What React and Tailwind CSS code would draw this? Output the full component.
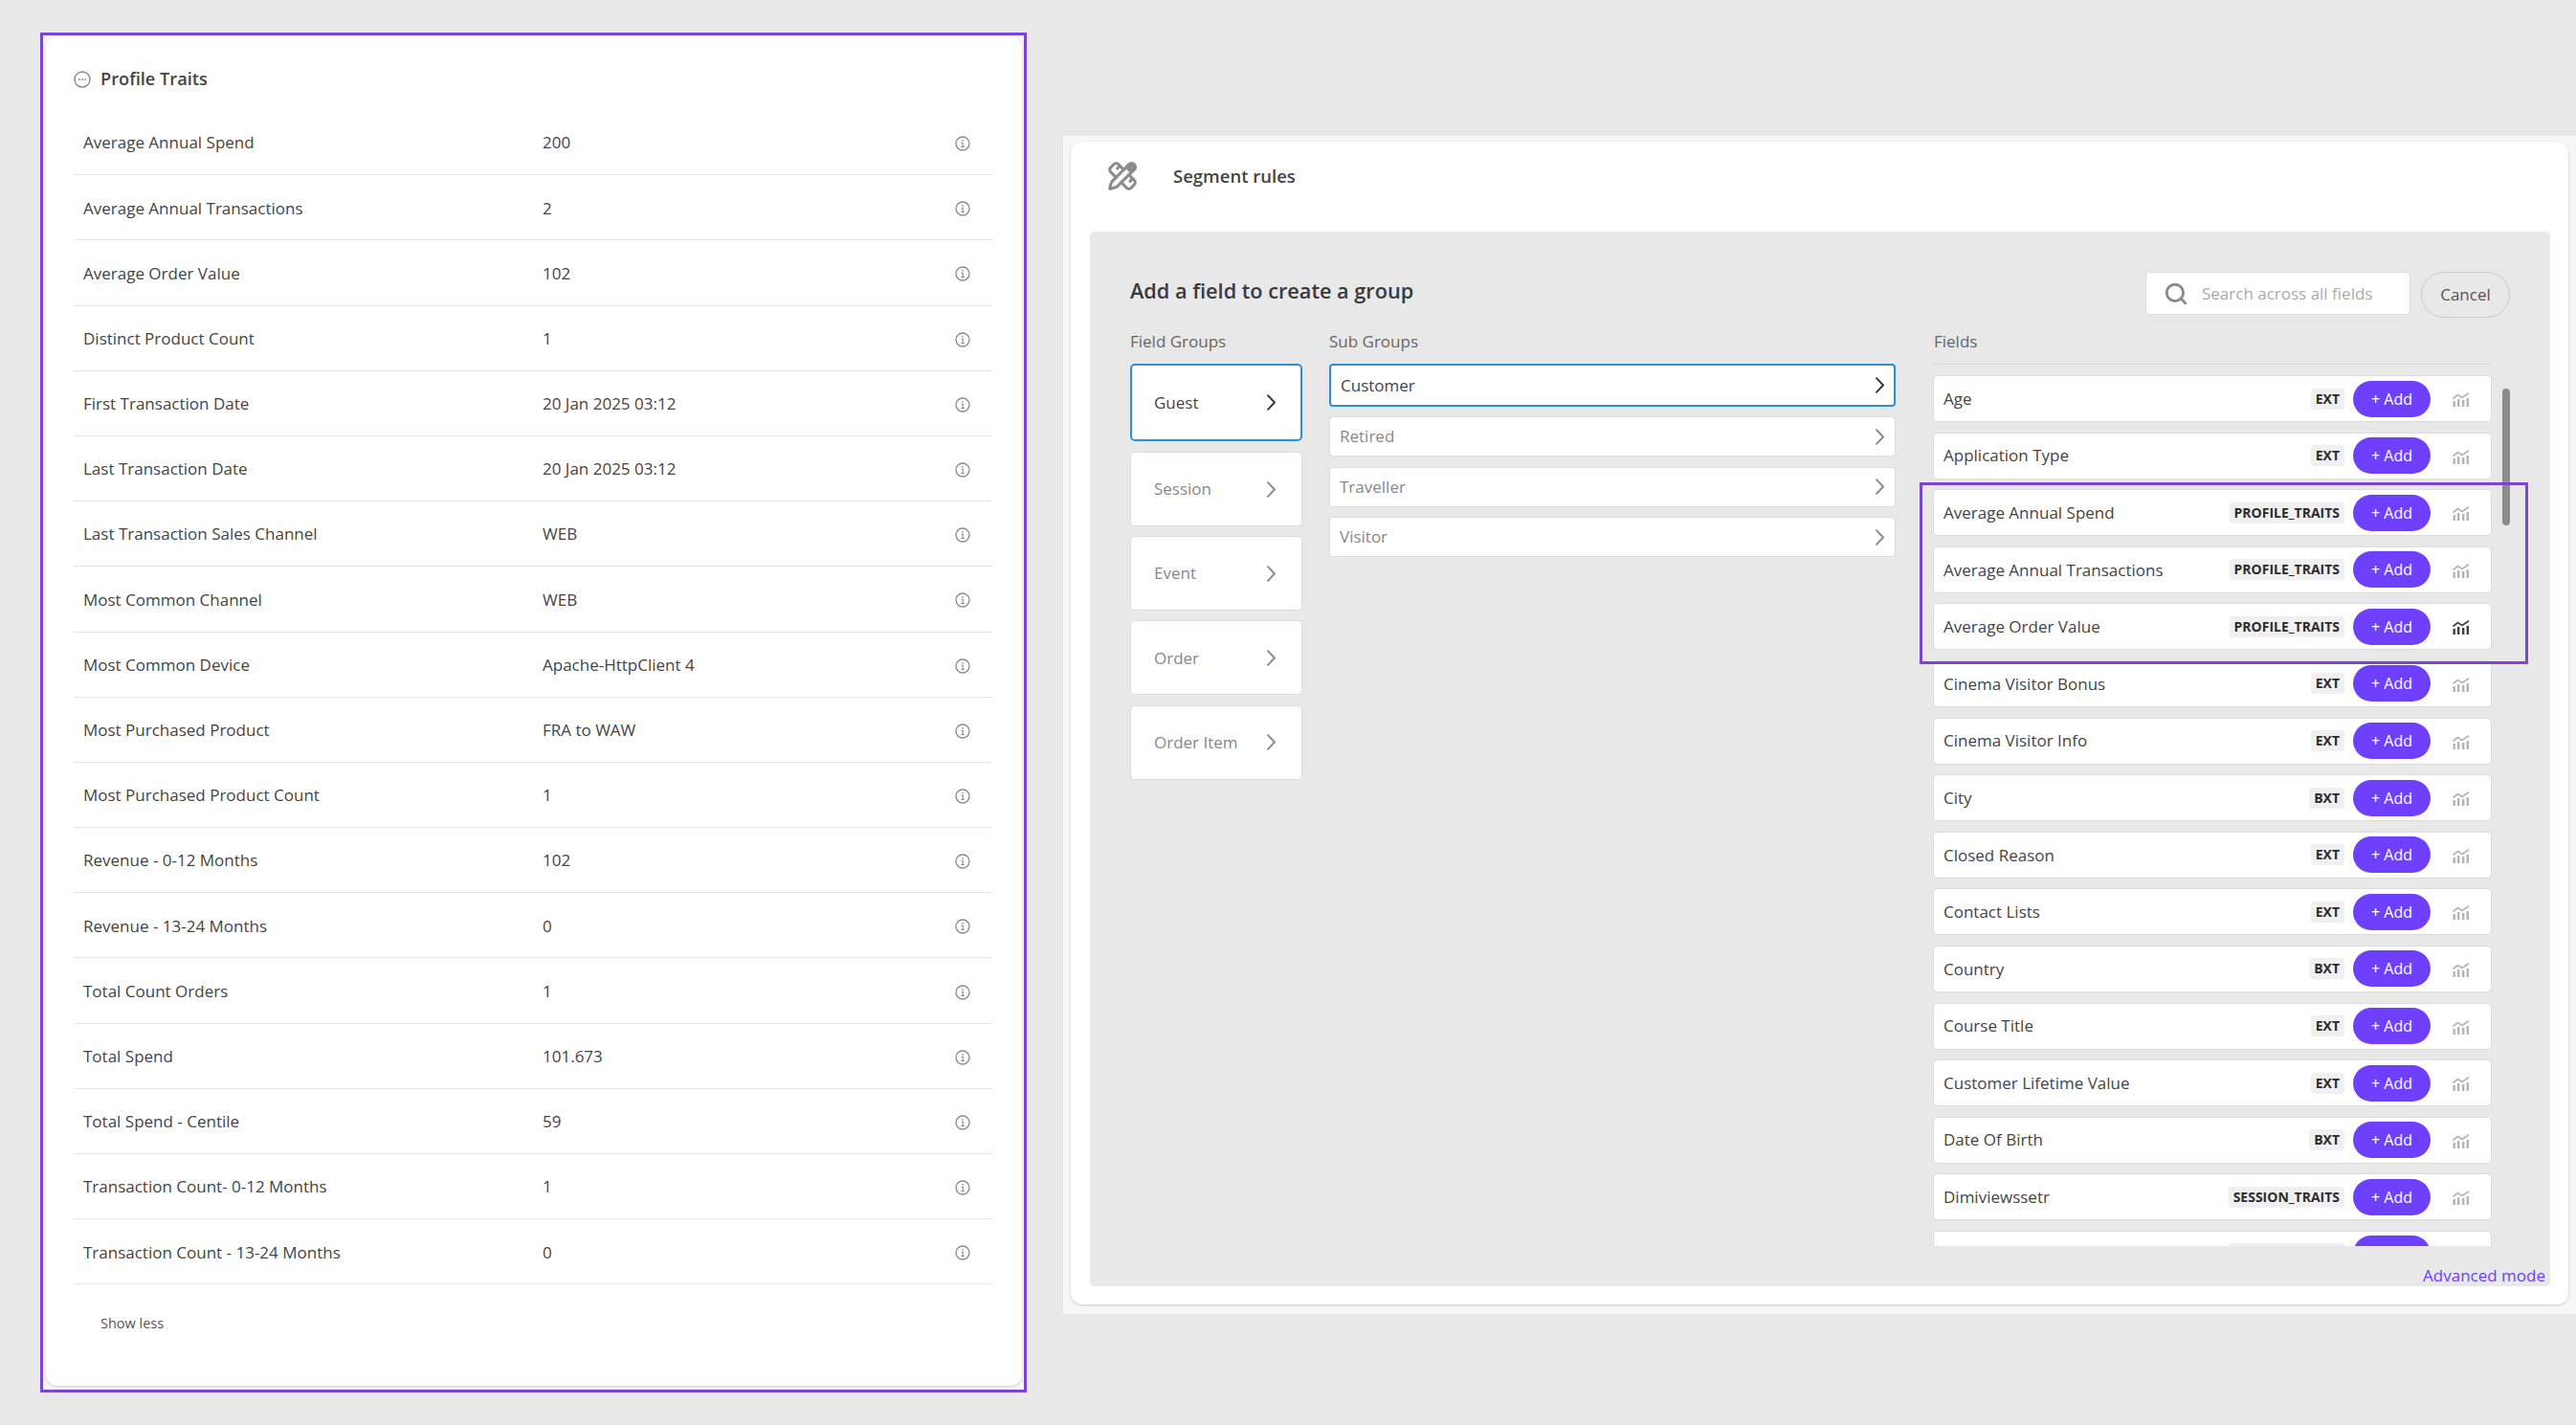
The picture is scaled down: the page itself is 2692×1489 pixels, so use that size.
import React from 'react'
import { Search } from 'lucide-react'

const traits = [
  ['Average Annual Spend', '200'],
  ['Average Annual Transactions', '2'],
  ['Average Order Value', '102'],
  ['Distinct Product Count', '1'],
  ['First Transaction Date', '20 Jan 2025 03:12'],
  ['Last Transaction Date', '20 Jan 2025 03:12'],
  ['Last Transaction Sales Channel', 'WEB'],
  ['Most Common Channel', 'WEB'],
  ['Most Common Device', 'Apache-HttpClient 4'],
  ['Most Purchased Product', 'FRA to WAW'],
  ['Most Purchased Product Count', '1'],
  ['Revenue - 0-12 Months', '102'],
  ['Revenue - 13-24 Months', '0'],
  ['Total Count Orders', '1'],
  ['Total Spend', '101.673'],
  ['Total Spend - Centile', '59'],
  ['Transaction Count- 0-12 Months', '1'],
  ['Transaction Count - 13-24 Months', '0'],
]

const fieldGroups = ['Guest', 'Session', 'Event', 'Order', 'Order Item']
const subGroups = ['Customer', 'Retired', 'Traveller', 'Visitor']

const fields = [
  ['Age', 'EXT'],
  ['Application Type', 'EXT'],
  ['Average Annual Spend', 'PROFILE_TRAITS'],
  ['Average Annual Transactions', 'PROFILE_TRAITS'],
  ['Average Order Value', 'PROFILE_TRAITS', true],
  ['Cinema Visitor Bonus', 'EXT'],
  ['Cinema Visitor Info', 'EXT'],
  ['City', 'BXT'],
  ['Closed Reason', 'EXT'],
  ['Contact Lists', 'EXT'],
  ['Country', 'BXT'],
  ['Course Title', 'EXT'],
  ['Customer Lifetime Value', 'EXT'],
  ['Date Of Birth', 'BXT'],
  ['Dimiviewssetr', 'SESSION_TRAITS'],
]

function DotsIcon() {
  return (
    <svg width="18" height="18" viewBox="0 0 18 18" fill="none">
      <circle cx="9" cy="9" r="8" stroke="#8a8a8a" strokeWidth="1.4" />
      <circle cx="6" cy="9" r="0.9" fill="#8a8a8a" />
      <circle cx="9" cy="9" r="0.9" fill="#8a8a8a" />
      <circle cx="12" cy="9" r="0.9" fill="#8a8a8a" />
    </svg>
  )
}

function InfoIcon() {
  return (
    <svg width="16" height="16" viewBox="0 0 16 16" fill="none" stroke="#8a8a8a">
      <circle cx="8" cy="8" r="7" strokeWidth="1.3" />
      <path d="M6.6 7.2H8.2V11.4M6.4 11.5H9.8" strokeWidth="1.1" />
      <circle cx="8" cy="4.9" r="0.8" fill="#8a8a8a" stroke="none" />
    </svg>
  )
}

function Chevron({ color }) {
  return (
    <svg width="11" height="17" viewBox="0 0 11 17" fill="none" stroke={color} strokeWidth="1.9" strokeLinecap="round" strokeLinejoin="round">
      <path d="M2 1.2 9 8.5 2 15.8" />
    </svg>
  )
}

function GraphIcon({ active }) {
  const c = active ? '#3f3f3f' : '#b4b4b4'
  return (
    <svg width="18" height="15" viewBox="0 0 18 15" fill={c}>
      <rect x="0.5" y="9" width="2.4" height="6" />
      <rect x="5" y="7" width="2.4" height="8" />
      <rect x="10" y="8" width="2.4" height="7" />
      <rect x="14.6" y="6" width="2.4" height="9" />
      <path d="M0.5 6.5 5.5 2.5 10 5.5 17 0.8" fill="none" stroke={c} strokeWidth="1.7" />
    </svg>
  )
}

function RulesIcon() {
  return (
    <svg width="32" height="32" viewBox="0 0 24 24" fill="none" stroke="#8c8c8c" strokeWidth="2.3" strokeLinecap="round" strokeLinejoin="round">
      <path d="M13 7 8.7 2.7a2.41 2.41 0 0 0-3.4 0L2.7 5.3a2.41 2.41 0 0 0 0 3.4L7 13" />
      <path d="m8 6 2-2" />
      <path d="m18 16 2-2" />
      <path d="m17 11 4.3 4.3c.94.94.94 2.46 0 3.4l-2.6 2.6c-.94.94-2.46.94-3.4 0L11 17" />
      <path d="M21.174 6.812a1 1 0 0 0-3.986-3.987L3.842 16.174a2 2 0 0 0-.5.83l-1.321 4.352a.5.5 0 0 0 .623.622l4.353-1.32a2 2 0 0 0 .83-.497z" />
      <path d="M21.174 6.812a1 1 0 0 0-3.986-3.987L15 5l4 4z" fill="#8c8c8c" />
    </svg>
  )
}

function TraitRow({ name, value }) {
  return (
    <div className="flex h-[68.2px] items-center border-b border-[#e4e4e4] pl-[10px] text-[#444444]">
      <div className="w-[480px] pt-[1px]">{name}</div>
      <div className="flex-1 pt-[1px]">{value}</div>
      <div className="mr-[23px] mt-[3px] flex items-center">
        <InfoIcon />
      </div>
    </div>
  )
}

function FieldRow({ name, tag, active, label = '+ Add' }) {
  return (
    <div className="mb-[10.6px] flex h-[49px] w-[584px] items-center rounded-[5px] border border-[#dddddd] bg-white pl-[10px] text-[#444444]">
      <div className="flex-1">{name}</div>
      <div className="rounded-[3px] bg-[#f0f0f0] px-[5px] text-[14px] leading-[22px] font-bold text-[#2b2b2b]">{tag}</div>
      <button className="ml-[9px] h-[38px] w-[81px] rounded-[19px] bg-[#6e3ffc] text-[16px] text-white">{label}</button>
      <div className="ml-[23px] mr-[22px] mt-[2px] flex items-center">
        <GraphIcon active={active} />
      </div>
    </div>
  )
}

export default function App() {
  return (
    <div className="flex h-[1489px] w-[2692px] items-start overflow-hidden bg-[#e8e8e8] pl-[42px] pt-[34px] text-[17px] font-['Open_Sans',sans-serif]">
      {/* left: profile traits */}
      <div className="h-[1421px] w-[1031px] shrink-0 border-[3px] border-[#7b44d1] bg-[#f7f7f7] pb-[4px] pl-[3px] pr-[2px] pt-[1px]">
        <div className="h-full rounded-xl bg-white pl-[29px] pr-[31px] pt-[32px] shadow-[0_1px_3px_rgba(0,0,0,0.18)]">
          <div className="mb-[19px] flex h-[26px] items-center">
            <DotsIcon />
            <span className="ml-[10px] text-[18.2px] font-semibold text-[#444444]">Profile Traits</span>
          </div>
          {traits.map(([name, value]) => (
            <TraitRow key={name} name={name} value={value} />
          ))}
          <div className="ml-[28px] mt-[30px] text-[14.5px] text-[#555555]">Show less</div>
        </div>
      </div>

      {/* right: segment rules */}
      <div className="ml-[38px] mt-[108px] h-[1231px] w-[1581px] shrink-0 bg-[#f7f7f7] pb-[10px] pl-[8px] pr-[8px] pt-[6px]">
        <div className="h-[1215px] rounded-xl bg-white px-[20px] shadow-[0_1px_3px_rgba(0,0,0,0.18)]">
          <div className="flex h-[94px] items-center pb-[22px] pl-[18px]">
            <RulesIcon />
            <span className="ml-[37px] text-[18.5px] font-semibold text-[#444444]">Segment rules</span>
          </div>

          <div className="h-[1102px] w-[1526px] rounded-[5px] bg-[#e8e8e8] pl-[42px] pr-[42px] pt-[42px]">
            <div className="flex h-[48px] items-start">
              <div className="flex-1 pb-[2px] text-[21.7px] leading-[40px] font-semibold text-[#3a3a3a]">Add a field to create a group</div>
              <div className="flex h-[45px] w-[277px] items-center rounded-[4px] border border-[#dddddd] bg-white pl-[18px] text-[17px] text-[#aaaaaa]">
                <Search size={26} color="#8a8a8a" strokeWidth={2.6} />
                <span className="ml-[14px]">Search across all fields</span>
              </div>
              <button className="ml-[11px] h-[48px] w-[93px] rounded-full border border-[#cccccc] text-[#555555]">Cancel</button>
            </div>

            <div className="mt-[13px] flex w-[1444px] items-start">
              <div className="w-[180px] shrink-0">
                <div className="mb-[11px] h-[24px] leading-[24px] text-[#666666]">Field Groups</div>
                {fieldGroups.map((g, i) =>
                  i === 0 ? (
                    <div key={g} className="mb-[11px] flex h-[81px] items-center justify-between rounded-[5px] border-2 border-[#2b8fdb] bg-white pl-[23px] pr-[25px] text-[#444444]">
                      {g}
                      <Chevron color="#333333" />
                    </div>
                  ) : (
                    <div key={g} className="mb-[10.2px] flex h-[78px] items-center justify-between rounded-[5px] border border-[#dddddd] bg-white pl-[24px] pr-[26px] text-[#888888]">
                      {g}
                      <Chevron color="#888888" />
                    </div>
                  ),
                )}
              </div>

              <div className="ml-[28px] w-[592px] shrink-0">
                <div className="mb-[11px] h-[24px] leading-[24px] text-[#666666]">Sub Groups</div>
                {subGroups.map((g, i) =>
                  i === 0 ? (
                    <div key={g} className="mb-[10px] flex h-[45px] items-center justify-between rounded-[4px] border-2 border-[#2b8fdb] bg-white pl-[10px] pr-[9px] text-[#444444]">
                      {g}
                      <Chevron color="#333333" />
                    </div>
                  ) : (
                    <div key={g} className="mb-[10.6px] flex h-[42px] items-center justify-between rounded-[4px] border border-[#dddddd] bg-white pl-[10px] pr-[10px] text-[#888888]">
                      {g}
                      <Chevron color="#888888" />
                    </div>
                  ),
                )}
              </div>

              <div className="relative ml-[39px] w-[604px] shrink-0">
                <div className="mb-[11px] h-[24px] pl-px leading-[24px] text-[#666666]">Fields</div>
                <div className="relative h-[922px] overflow-hidden">
                  <div className="ml-px h-[12px] w-[581px] border-t border-[#d8d8d8]" />
                  {fields.map(([name, tag, active]) => (
                    <FieldRow key={name} name={name} tag={tag} active={active} />
                  ))}
                  {/* row cut by the list edge, its text is out of view */}
                  <FieldRow name="" label="" tag={<span className="inline-block w-[111px]">&nbsp;</span>} />
                  <div className="absolute left-[595px] top-[26px] h-[143px] w-[8px] rounded bg-[#8c8c8c]" />
                </div>
                <div className="pointer-events-none absolute left-[-14px] top-[159px] h-[190px] w-[636px] border-[3px] border-[#7b44d1]" />
              </div>
            </div>

            <div className="-mr-[37px] mt-[19px] text-right leading-[23px] text-[#6e3ffc]">Advanced mode</div>
          </div>
        </div>
      </div>
    </div>
  )
}
